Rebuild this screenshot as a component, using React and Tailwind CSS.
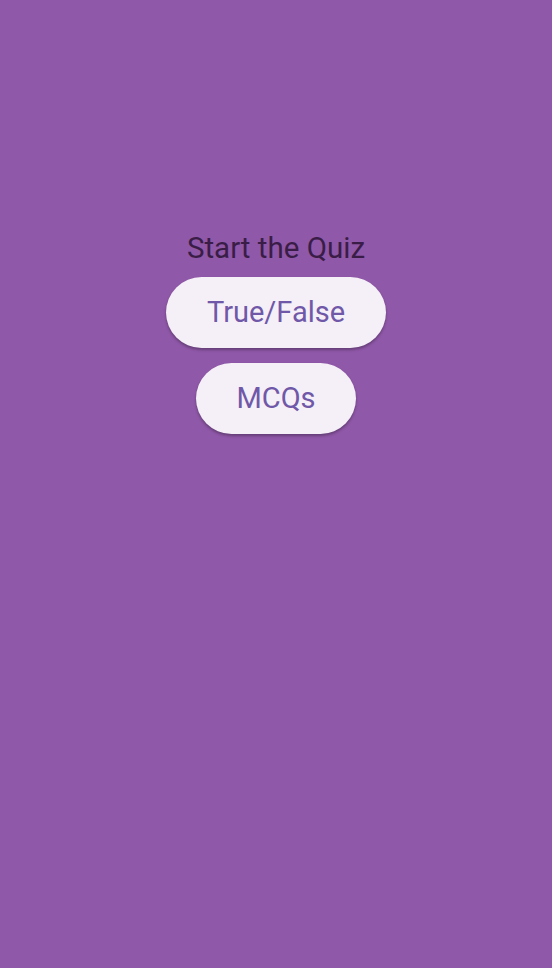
export default function App() {
  return (
    <div className="w-[552px] h-[968px] bg-[#9058a9] flex flex-col items-center pt-[231px]" style={{fontFamily: "Roboto, sans-serif"}}>
      <div className="text-[29.5px] leading-[34px] text-[#3a1d47]">Start the Quiz</div>
      <button className="mt-[12px] h-[71px] px-[41px] rounded-full bg-[#f5eff7] text-[#7058a8] text-[29px] shadow-[0_2px_3px_rgba(0,0,0,0.3)]">True/False</button>
      <button className="mt-[15px] h-[71px] px-[40px] rounded-full bg-[#f5eff7] text-[#7058a8] text-[29px] shadow-[0_2px_3px_rgba(0,0,0,0.3)]">MCQs</button>
    </div>
  );
}
